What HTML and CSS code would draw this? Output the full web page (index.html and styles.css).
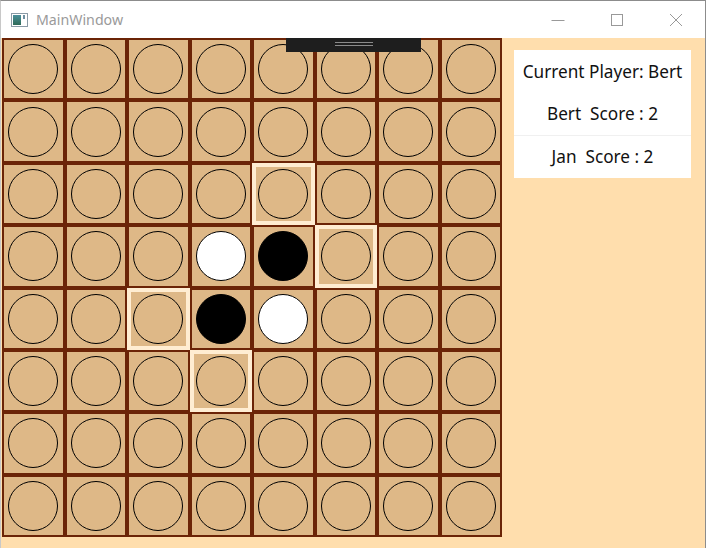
FILE: index.html
```html
<!DOCTYPE html>
<html>
<head>
<meta charset="utf-8">
<link rel="stylesheet" href="styles.css">
</head>
<body>
<div class="window">
  <div class="titlebar">
    <svg class="app-icon" width="17" height="14" viewBox="0 0 17 14">
      <defs>
        <linearGradient id="g" x1="0" y1="0" x2="0" y2="1">
          <stop offset="0" stop-color="#4a8f9a"/>
          <stop offset="1" stop-color="#2f6b58"/>
        </linearGradient>
      </defs>
      <rect x="0.5" y="0.5" width="16" height="13" fill="#ffffff" stroke="#8a9aa6"/>
      <rect x="2" y="2" width="8" height="10" fill="url(#g)"/>
      <rect x="12" y="2" width="2" height="4" fill="#6f8fa0"/>
    </svg>
    <span class="title">MainWindow</span>
    <div class="controls">
      <svg class="ctl" width="14" height="14" viewBox="0 0 14 14"><line x1="0.5" y1="7.5" x2="13.5" y2="7.5" stroke="#999" stroke-width="1"/></svg>
      <svg class="ctl" width="14" height="14" viewBox="0 0 14 14"><rect x="1.5" y="1.5" width="11" height="11" fill="none" stroke="#999" stroke-width="1"/></svg>
      <svg class="ctl" width="14" height="14" viewBox="0 0 14 14"><path d="M1 1 L13 13 M13 1 L1 13" stroke="#999" stroke-width="1"/></svg>
    </div>
  </div>
  <div class="content">
    <div class="board" id="board"></div>
    <div class="panel">
      <div class="row">Current Player: Bert</div>
      <div class="row">Bert&nbsp; Score : 2</div>
      <div class="row sep">Jan&nbsp; Score : 2</div>
    </div>
    <div class="debugbar"><span class="grip"></span></div>
  </div>
</div>
<script>
  var board = document.getElementById('board');
  var pieces = {'3,3':'white','3,4':'black','4,3':'black','4,4':'white'};
  var hl = {'2,4':1,'3,5':1,'4,2':1,'5,3':1};
  for (var r = 0; r < 8; r++) {
    for (var c = 0; c < 8; c++) {
      var cell = document.createElement('div');
      cell.className = 'cell' + (hl[r+','+c] ? ' hl' : '');
      var disc = document.createElement('div');
      disc.className = 'disc' + (pieces[r+','+c] ? ' ' + pieces[r+','+c] : '');
      cell.appendChild(disc);
      board.appendChild(cell);
    }
  }
</script>
</body>
</html>
```
FILE: styles.css
```css
* { box-sizing: border-box; }
html, body { margin: 0; padding: 0; }
body { width: 706px; height: 548px; overflow: hidden; background: #ffffff; }

.window {
  width: 706px;
  height: 548px;
  border-top: 1px solid #8c8c8c;
  border-left: 1px solid #c8c8c8;
  border-right: 1px solid #8c8c8c;
  display: flex;
  flex-direction: column;
  font-family: "Noto Sans", "Open Sans", sans-serif;
}

.titlebar {
  height: 37px;
  flex: none;
  background: #ffffff;
  display: flex;
  align-items: center;
  padding-left: 10px;
}
.app-icon { flex: none; }
.title {
  margin-left: 8px;
  font-size: 14.2px;
  color: #9a9a9a;
  font-family: "Noto Sans", sans-serif;
}
.controls {
  margin-left: auto;
  display: flex;
  gap: 45px;
  margin-right: 22px;
}
.ctl { display: block; }

.content {
  flex: 1;
  background: #ffdead;
  display: flex;
  align-items: flex-start;
  position: relative;
}

.board {
  margin-left: 1px;
  width: 500px;
  height: 499px;
  display: grid;
  grid-template-columns: repeat(8, 1fr);
  grid-template-rows: repeat(8, 1fr);
}
.cell {
  border: 2px solid #6b2407;
  background: #deb887;
  display: flex;
  align-items: center;
  justify-content: center;
}
.cell.hl {
  border-color: #ffedd2;
  box-shadow: inset 0 0 0 2px #ffedd2;
}
.disc {
  width: 50px;
  height: 50px;
  border-radius: 50%;
  border: 1.6px solid #000;
}
.disc.black { background: #000; border-color: #000; }
.disc.white { background: #fff; }

.panel {
  margin-left: 12px;
  margin-top: 12px;
  width: 177px;
  height: 128px;
  background: #ffffff;
  display: flex;
  flex-direction: column;
}
.row {
  flex: 1;
  display: flex;
  align-items: center;
  justify-content: center;
  font-size: 17.2px;
  color: #111;
  white-space: nowrap;
}
.row.sep { border-top: 1px solid #f0f0f0; }

.debugbar {
  position: absolute;
  left: 285px;
  top: 0;
  width: 135px;
  height: 14px;
  background: #1e1e1e;
}
.grip {
  position: absolute;
  left: 49px;
  top: 4px;
  width: 38px;
  height: 4px;
  border-top: 1px solid #8a8a8a;
  border-bottom: 1px solid #8a8a8a;
}
```
